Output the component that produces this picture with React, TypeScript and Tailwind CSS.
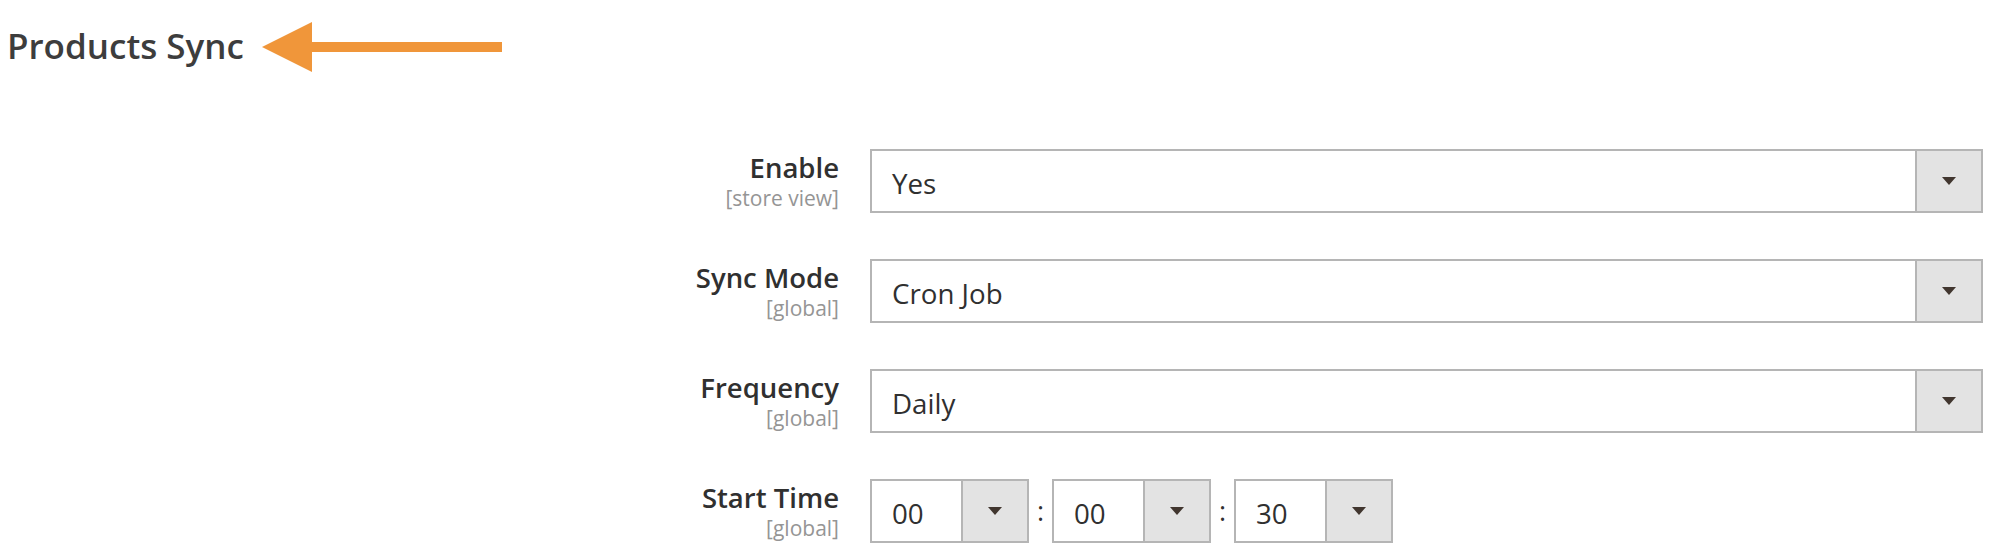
import React from 'react';

const font = { fontFamily: '"Open Sans", "Noto Sans", sans-serif' };

const Caret = () => (
  <svg width="14" height="8" viewBox="0 0 14 8" className="block">
    <path d="M0 0 H14 L7 8 Z" fill="#41362f" />
  </svg>
);

type SelectProps = {
  value: string;
  className?: string;
};

const Select = ({ value, className }: SelectProps) => {
  return (
    <div
      className={`flex h-16 border-2 border-[#b5b5b5] bg-white ${className ?? ''}`}
    >
      <div className="flex-1 flex items-center pl-5 pt-[3px] text-[27.7px] leading-8 text-[#303030]">
        {value}
      </div>
      <div className="w-[66px] flex items-center justify-center border-l-2 border-[#b5b5b5] bg-[#e3e3e3]">
        <Caret />
      </div>
    </div>
  );
};

type RowProps = {
  label: string;
  scope: string;
  children: React.ReactNode;
};

const Row = ({ label, scope, children }: RowProps) => {
  return (
    <div className="flex">
      <div className="w-[831px] pt-[3px] text-right">
        <div className="text-[27.5px] leading-8 font-semibold text-[#303030]">
          {label}
        </div>
        <div className="mt-[2px] text-[21px] leading-6 text-[#959595]">
          {scope}
        </div>
      </div>
      <div className="ml-[31px] flex-1">{children}</div>
    </div>
  );
};

const App = () => {
  return (
    <div className="w-[1992px] h-[548px] bg-white pl-[7px] pr-[9px] overflow-hidden" style={font}>
      <div className="flex items-center h-[94px]">
        <h2 className="text-[35px] leading-10 font-semibold text-[#3d3d3d] -mt-[2px]">
          Products Sync
        </h2>
        <svg width="240" height="50" viewBox="0 0 240 50" className="ml-[18px]">
          <path d="M0 25 L50 0 V20 H240 V30 H50 V50 Z" fill="#f0963a" />
        </svg>
      </div>
      <div className="flex flex-col gap-[46px] mt-[55px] pl-px">
        <Row label="Enable" scope="[store view]">
          <Select value="Yes" />
        </Row>
        <Row label="Sync Mode" scope="[global]">
          <Select value="Cron Job" />
        </Row>
        <Row label="Frequency" scope="[global]">
          <Select value="Daily" />
        </Row>
        <Row label="Start Time" scope="[global]">
          <div className="flex items-center">
            <Select value="00" className="w-[159px]" />
            <span className="w-[23px] text-center text-[27px] text-[#303030]">:</span>
            <Select value="00" className="w-[159px]" />
            <span className="w-[23px] text-center text-[27px] text-[#303030]">:</span>
            <Select value="30" className="w-[159px]" />
          </div>
        </Row>
      </div>
    </div>
  );
};

export default App;
